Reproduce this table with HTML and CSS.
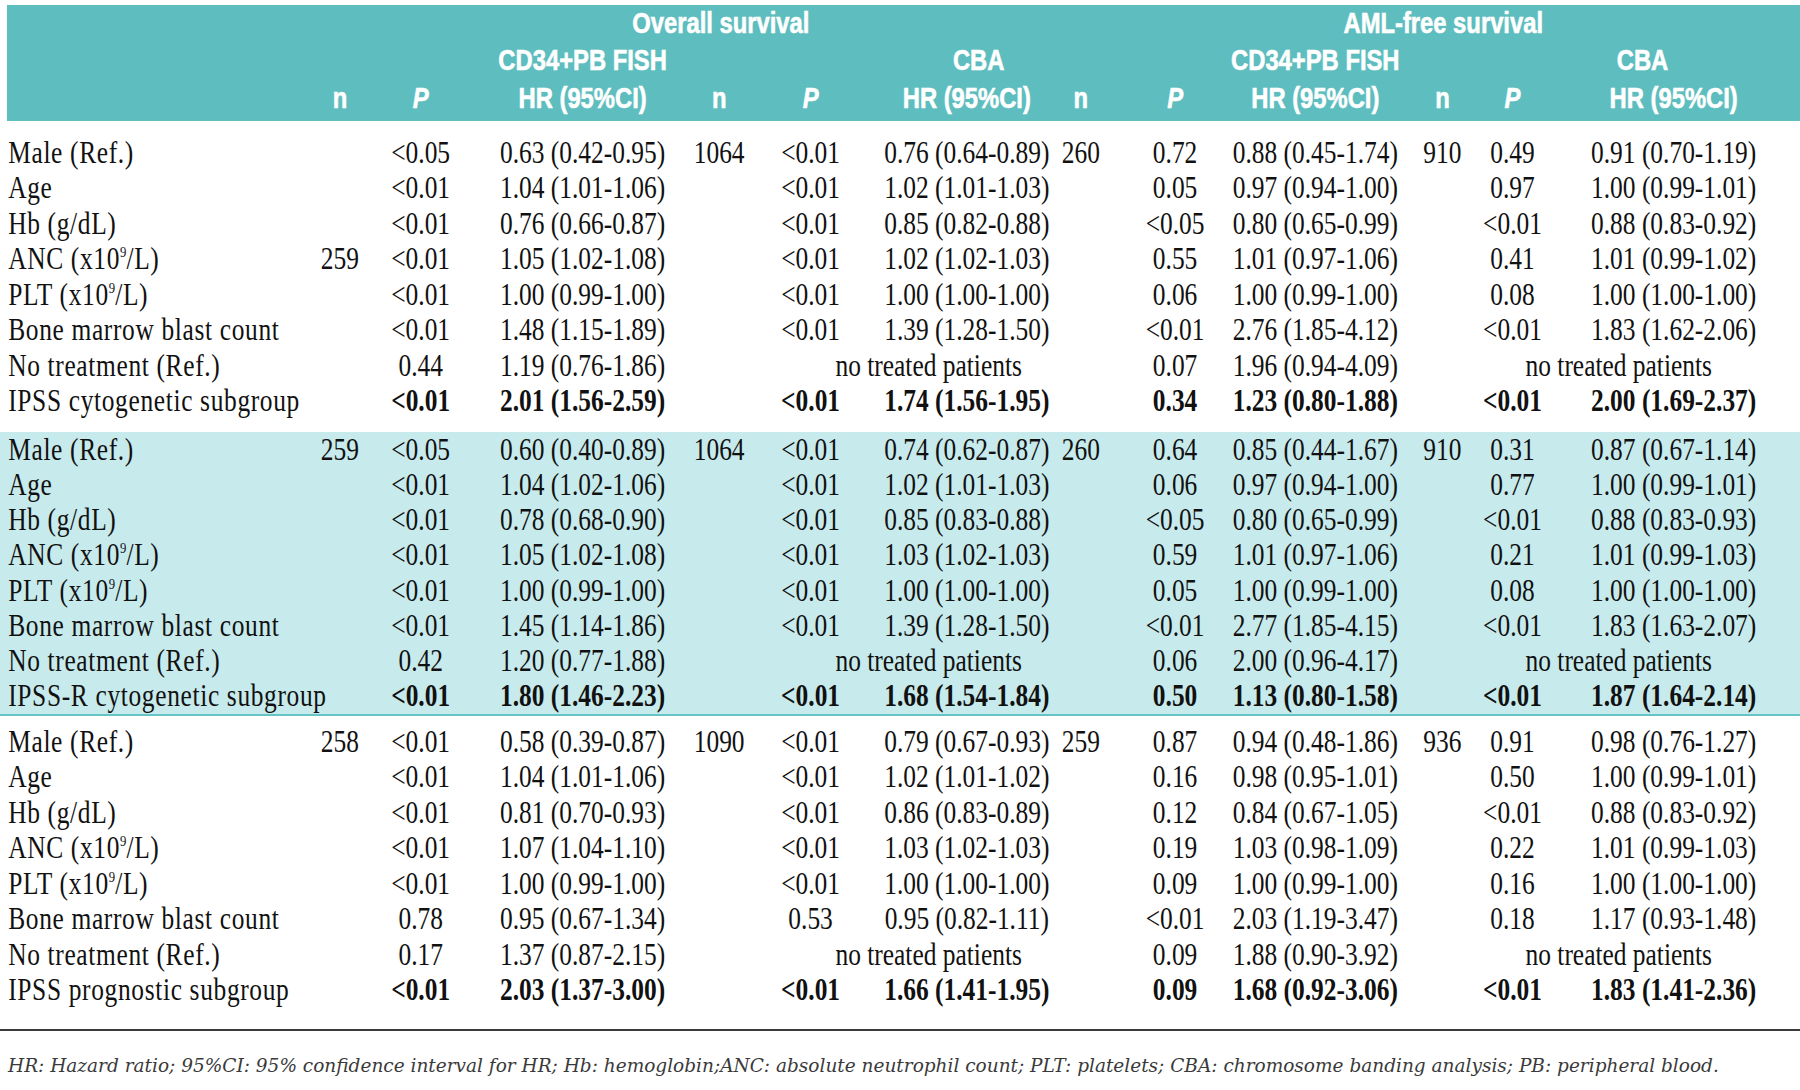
FILE: index.html
```html
<!DOCTYPE html>
<html lang="en">
<head>
<meta charset="utf-8">
<title>Cox regression table</title>
<link rel="stylesheet" href="styles.css">
</head>
<body>
<div class="page">
  <div class="clip">
    <table class="tbl">
      <colgroup>
        <col class="w-lab"><col class="w-n"><col class="w-p1"><col class="w-hr1"><col class="w-n2"><col class="w-p2"><col class="w-hr2"><col class="w-n3"><col class="w-p3"><col class="w-hr3"><col class="w-n4"><col class="w-p4"><col class="w-hr4">
      </colgroup>
      <thead>
        <tr class="h1">
          <th colspan="2" class="lead"></th>
          <th colspan="5">Overall survival</th>
          <th colspan="6">AML-free survival</th>
        </tr>
        <tr class="h2">
          <th colspan="3" class="lead"></th>
          <th>CD34+PB FISH</th>
          <th colspan="2"></th>
          <th>CBA</th>
          <th colspan="2"></th>
          <th>CD34+PB FISH</th>
          <th colspan="2"></th>
          <th>CBA</th>
        </tr>
        <tr class="h3 cols">
          <th class="lead"></th>
          <th>n</th><th class="it">P</th><th>HR (95%CI)</th>
          <th>n</th><th class="it">P</th><th>HR (95%CI)</th>
          <th>n</th><th class="it">P</th><th>HR (95%CI)</th>
          <th>n</th><th class="it">P</th><th>HR (95%CI)</th>
        </tr>
      </thead>
      <tbody>
        <tr class="gap g1"><td colspan="13"></td></tr>
        <tr class="row cols"><td>Male (Ref.)</td><td></td><td>&lt;0.05</td><td>0.63 (0.42-0.95)</td><td>1064</td><td>&lt;0.01</td><td>0.76 (0.64-0.89)</td><td>260</td><td>0.72</td><td>0.88 (0.45-1.74)</td><td>910</td><td>0.49</td><td>0.91 (0.70-1.19)</td></tr>
        <tr class="row cols"><td>Age</td><td></td><td>&lt;0.01</td><td>1.04 (1.01-1.06)</td><td></td><td>&lt;0.01</td><td>1.02 (1.01-1.03)</td><td></td><td>0.05</td><td>0.97 (0.94-1.00)</td><td></td><td>0.97</td><td>1.00 (0.99-1.01)</td></tr>
        <tr class="row cols"><td>Hb (g/dL)</td><td></td><td>&lt;0.01</td><td>0.76 (0.66-0.87)</td><td></td><td>&lt;0.01</td><td>0.85 (0.82-0.88)</td><td></td><td>&lt;0.05</td><td>0.80 (0.65-0.99)</td><td></td><td>&lt;0.01</td><td>0.88 (0.83-0.92)</td></tr>
        <tr class="row cols"><td>ANC (x10<sup>9</sup>/L)</td><td>259</td><td>&lt;0.01</td><td>1.05 (1.02-1.08)</td><td></td><td>&lt;0.01</td><td>1.02 (1.02-1.03)</td><td></td><td>0.55</td><td>1.01 (0.97-1.06)</td><td></td><td>0.41</td><td>1.01 (0.99-1.02)</td></tr>
        <tr class="row cols"><td>PLT (x10<sup>9</sup>/L)</td><td></td><td>&lt;0.01</td><td>1.00 (0.99-1.00)</td><td></td><td>&lt;0.01</td><td>1.00 (1.00-1.00)</td><td></td><td>0.06</td><td>1.00 (0.99-1.00)</td><td></td><td>0.08</td><td>1.00 (1.00-1.00)</td></tr>
        <tr class="row cols"><td>Bone marrow blast count</td><td></td><td>&lt;0.01</td><td>1.48 (1.15-1.89)</td><td></td><td>&lt;0.01</td><td>1.39 (1.28-1.50)</td><td></td><td>&lt;0.01</td><td>2.76 (1.85-4.12)</td><td></td><td>&lt;0.01</td><td>1.83 (1.62-2.06)</td></tr>
        <tr class="row nt"><td>No treatment (Ref.)</td><td></td><td>0.44</td><td>1.19 (0.76-1.86)</td><td></td><td colspan="2">no treated patients</td><td></td><td>0.07</td><td>1.96 (0.94-4.09)</td><td></td><td colspan="2">no treated patients</td></tr>
        <tr class="row cols bold"><td>IPSS cytogenetic subgroup</td><td></td><td>&lt;0.01</td><td>2.01 (1.56-2.59)</td><td></td><td>&lt;0.01</td><td>1.74 (1.56-1.95)</td><td></td><td>0.34</td><td>1.23 (0.80-1.88)</td><td></td><td>&lt;0.01</td><td>2.00 (1.69-2.37)</td></tr>
        <tr class="gap g2"><td colspan="13"></td></tr>
      </tbody>
      <tbody class="band">
        <tr class="row cols"><td>Male (Ref.)</td><td>259</td><td>&lt;0.05</td><td>0.60 (0.40-0.89)</td><td>1064</td><td>&lt;0.01</td><td>0.74 (0.62-0.87)</td><td>260</td><td>0.64</td><td>0.85 (0.44-1.67)</td><td>910</td><td>0.31</td><td>0.87 (0.67-1.14)</td></tr>
        <tr class="row cols"><td>Age</td><td></td><td>&lt;0.01</td><td>1.04 (1.02-1.06)</td><td></td><td>&lt;0.01</td><td>1.02 (1.01-1.03)</td><td></td><td>0.06</td><td>0.97 (0.94-1.00)</td><td></td><td>0.77</td><td>1.00 (0.99-1.01)</td></tr>
        <tr class="row cols"><td>Hb (g/dL)</td><td></td><td>&lt;0.01</td><td>0.78 (0.68-0.90)</td><td></td><td>&lt;0.01</td><td>0.85 (0.83-0.88)</td><td></td><td>&lt;0.05</td><td>0.80 (0.65-0.99)</td><td></td><td>&lt;0.01</td><td>0.88 (0.83-0.93)</td></tr>
        <tr class="row cols"><td>ANC (x10<sup>9</sup>/L)</td><td></td><td>&lt;0.01</td><td>1.05 (1.02-1.08)</td><td></td><td>&lt;0.01</td><td>1.03 (1.02-1.03)</td><td></td><td>0.59</td><td>1.01 (0.97-1.06)</td><td></td><td>0.21</td><td>1.01 (0.99-1.03)</td></tr>
        <tr class="row cols"><td>PLT (x10<sup>9</sup>/L)</td><td></td><td>&lt;0.01</td><td>1.00 (0.99-1.00)</td><td></td><td>&lt;0.01</td><td>1.00 (1.00-1.00)</td><td></td><td>0.05</td><td>1.00 (0.99-1.00)</td><td></td><td>0.08</td><td>1.00 (1.00-1.00)</td></tr>
        <tr class="row cols"><td>Bone marrow blast count</td><td></td><td>&lt;0.01</td><td>1.45 (1.14-1.86)</td><td></td><td>&lt;0.01</td><td>1.39 (1.28-1.50)</td><td></td><td>&lt;0.01</td><td>2.77 (1.85-4.15)</td><td></td><td>&lt;0.01</td><td>1.83 (1.63-2.07)</td></tr>
        <tr class="row nt"><td>No treatment (Ref.)</td><td></td><td>0.42</td><td>1.20 (0.77-1.88)</td><td></td><td colspan="2">no treated patients</td><td></td><td>0.06</td><td>2.00 (0.96-4.17)</td><td></td><td colspan="2">no treated patients</td></tr>
        <tr class="row cols bold"><td>IPSS-R cytogenetic subgroup</td><td></td><td>&lt;0.01</td><td>1.80 (1.46-2.23)</td><td></td><td>&lt;0.01</td><td>1.68 (1.54-1.84)</td><td></td><td>0.50</td><td>1.13 (0.80-1.58)</td><td></td><td>&lt;0.01</td><td>1.87 (1.64-2.14)</td></tr>
      </tbody>
      <tbody>
        <tr class="gap g3"><td colspan="13"></td></tr>
        <tr class="row cols"><td>Male (Ref.)</td><td>258</td><td>&lt;0.01</td><td>0.58 (0.39-0.87)</td><td>1090</td><td>&lt;0.01</td><td>0.79 (0.67-0.93)</td><td>259</td><td>0.87</td><td>0.94 (0.48-1.86)</td><td>936</td><td>0.91</td><td>0.98 (0.76-1.27)</td></tr>
        <tr class="row cols"><td>Age</td><td></td><td>&lt;0.01</td><td>1.04 (1.01-1.06)</td><td></td><td>&lt;0.01</td><td>1.02 (1.01-1.02)</td><td></td><td>0.16</td><td>0.98 (0.95-1.01)</td><td></td><td>0.50</td><td>1.00 (0.99-1.01)</td></tr>
        <tr class="row cols"><td>Hb (g/dL)</td><td></td><td>&lt;0.01</td><td>0.81 (0.70-0.93)</td><td></td><td>&lt;0.01</td><td>0.86 (0.83-0.89)</td><td></td><td>0.12</td><td>0.84 (0.67-1.05)</td><td></td><td>&lt;0.01</td><td>0.88 (0.83-0.92)</td></tr>
        <tr class="row cols"><td>ANC (x10<sup>9</sup>/L)</td><td></td><td>&lt;0.01</td><td>1.07 (1.04-1.10)</td><td></td><td>&lt;0.01</td><td>1.03 (1.02-1.03)</td><td></td><td>0.19</td><td>1.03 (0.98-1.09)</td><td></td><td>0.22</td><td>1.01 (0.99-1.03)</td></tr>
        <tr class="row cols"><td>PLT (x10<sup>9</sup>/L)</td><td></td><td>&lt;0.01</td><td>1.00 (0.99-1.00)</td><td></td><td>&lt;0.01</td><td>1.00 (1.00-1.00)</td><td></td><td>0.09</td><td>1.00 (0.99-1.00)</td><td></td><td>0.16</td><td>1.00 (1.00-1.00)</td></tr>
        <tr class="row cols"><td>Bone marrow blast count</td><td></td><td>0.78</td><td>0.95 (0.67-1.34)</td><td></td><td>0.53</td><td>0.95 (0.82-1.11)</td><td></td><td>&lt;0.01</td><td>2.03 (1.19-3.47)</td><td></td><td>0.18</td><td>1.17 (0.93-1.48)</td></tr>
        <tr class="row nt"><td>No treatment (Ref.)</td><td></td><td>0.17</td><td>1.37 (0.87-2.15)</td><td></td><td colspan="2">no treated patients</td><td></td><td>0.09</td><td>1.88 (0.90-3.92)</td><td></td><td colspan="2">no treated patients</td></tr>
        <tr class="row cols bold"><td>IPSS prognostic subgroup</td><td></td><td>&lt;0.01</td><td>2.03 (1.37-3.00)</td><td></td><td>&lt;0.01</td><td>1.66 (1.41-1.95)</td><td></td><td>0.09</td><td>1.68 (0.92-3.06)</td><td></td><td>&lt;0.01</td><td>1.83 (1.41-2.36)</td></tr>
      </tbody>
    </table>
  </div>
  <p class="note">HR: Hazard ratio; 95%CI: 95% confidence interval for HR; Hb: hemoglobin;ANC: absolute neutrophil count; PLT: platelets; CBA: chromosome banding analysis; PB: peripheral blood.</p>
</div>
</body>
</html>
```

FILE: styles.css
```css
html, body {
  margin: 0;
  padding: 0;
  background: #ffffff;
}

.page {
  width: 1800px;
  padding-top: 5px;
}

.clip {
  width: 1800px;
  overflow: hidden;
}

/* The table is laid out wide and squeezed horizontally to give the
   condensed type of the original; bands are painted once on the table. */
.tbl {
  width: 2196px;
  table-layout: fixed;
  border-collapse: separate;
  border-spacing: 0;
  transform: scaleX(0.82);
  transform-origin: 0 0;
  font-family: "Liberation Serif", "Times New Roman", serif;
  font-size: 31px;
  color: #111111;
  background-color: #ffffff;
  background-image: linear-gradient(to bottom,
    #5ebdbe 0, #5ebdbe 116px,
    #ffffff 116px, #ffffff 427px,
    #c7eaec 427px, #c7eaec 709px,
    #66c4c5 709px, #66c4c5 711px,
    #ffffff 711px, #ffffff 100%);
}

.w-lab { width: 372px; }
.w-n { width: 88px; }
.w-p1 { width: 120px; }
.w-hr1 { width: 249px; }
.w-n2 { width: 100px; }
.w-p2 { width: 123px; }
.w-hr2 { width: 232px; }
.w-n3 { width: 88px; }
.w-p3 { width: 115px; }
.w-hr3 { width: 230px; }
.w-n4 { width: 81px; }
.w-p4 { width: 113px; }
.w-hr4 { width: 285px; }

.tbl th,
.tbl td {
  padding: 0;
  white-space: nowrap;
  text-align: center;
  vertical-align: middle;
  line-height: 1.1;
}

/* header */
.tbl thead th {
  color: #ffffff;
  font-family: "Liberation Sans", Arial, sans-serif;
  font-weight: 700;
  font-size: 29px;
  line-height: 1;
  -webkit-text-stroke: 0.6px #ffffff;
}
.tbl thead th.lead {
  box-shadow: inset 8.5px 0 0 #ffffff;
}
.tbl thead th.it {
  font-style: italic;
}
.tbl thead .h1 { height: 36px; }
.tbl thead .h2 { height: 38px; }
.tbl thead .h3 { height: 42px; }
.tbl thead .h3 th { padding-bottom: 4px; }

.h1 > :nth-child(2) { padding-left: 14px; }
.h1 > :nth-child(3) { padding-left: 40px; }
.h2 > :nth-child(2) { padding-left: 12px; }
.h2 > :nth-child(4) { padding-left: 51px; }
.h2 > :nth-child(6) { padding-left: 4px; }
.h2 > :nth-child(8) { padding-right: 101px; }

/* body rows */
.row { height: 35.5px; }
.band .row { height: 35.25px; }

.tbl td:first-child {
  text-align: left;
  padding-left: 10px;
  letter-spacing: 0.8px;
}

.bold td { font-weight: 700; }
.bold td:first-child { font-weight: 400; }

.g1 { height: 14px; }
.g2 { height: 13px; }
.g3 { height: 10px; }

sup {
  font-size: 50%;
  line-height: 0;
  vertical-align: 0.75em;
  letter-spacing: 0;
}

/* column centring for regular 13-cell rows */
.cols > :nth-child(2) { padding-right: 3px; }
.cols > :nth-child(3) { padding-right: 14px; }
.cols > :nth-child(4) { padding-left: 12px; }
.cols > :nth-child(5) { padding-right: 4px; }
.cols > :nth-child(6) { padding-right: 4px; }
.cols > :nth-child(7) { padding-left: 22px; }
.cols > :nth-child(8) { padding-right: 20px; }
.cols > :nth-child(9) { padding-left: 7px; }
.cols > :nth-child(10) { padding-left: 4px; }
.cols > :nth-child(11) { padding-left: 3px; }
.cols > :nth-child(12) { padding-right: 20px; }
.cols > :nth-child(13) { padding-right: 25px; }

/* rows with merged "no treated patients" cells */
.nt > :nth-child(2) { padding-right: 3px; }
.nt > :nth-child(3) { padding-right: 14px; }
.nt > :nth-child(4) { padding-left: 12px; }
.nt > :nth-child(5) { padding-right: 4px; }
.nt > :nth-child(6) { padding-left: 52px; }
.nt > :nth-child(7) { padding-right: 20px; }
.nt > :nth-child(8) { padding-left: 7px; }
.nt > :nth-child(9) { padding-left: 4px; }
.nt > :nth-child(10) { padding-left: 3px; }
.nt > :nth-child(11) { padding-right: 46px; }

/* footnote */
.note {
  margin: 21px 0 0 0;
  border-top: 2px solid #3a3a3a;
  padding: 24px 0 0 8px;
  font-family: "DejaVu Serif", serif;
  font-style: italic;
  font-size: 18.5px;
  line-height: 22px;
  color: #3a3a3a;
  white-space: nowrap;
}
```
